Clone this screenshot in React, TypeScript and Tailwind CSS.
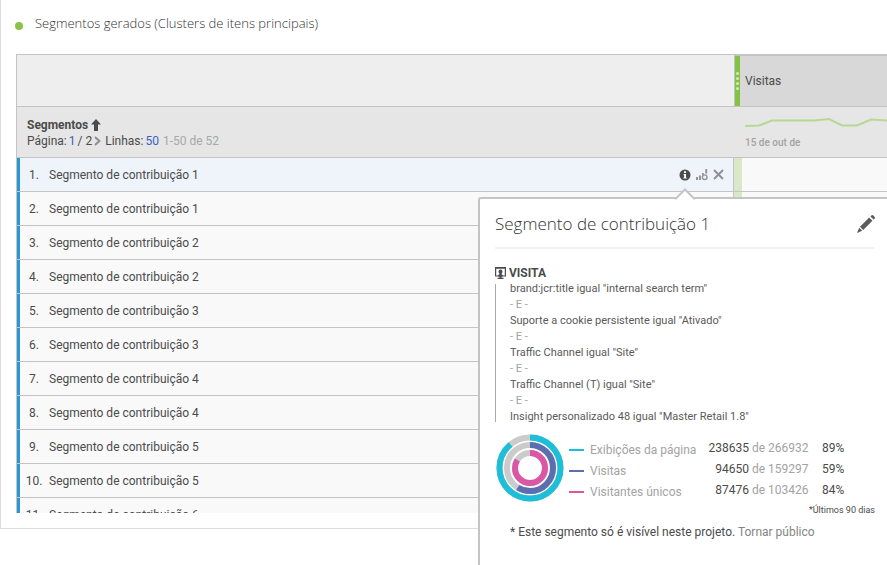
import React from "react";

const segments = [1, 1, 2, 2, 3, 3, 4, 4, 5, 5, 6].map((n) => `Segmento de contribuição ${n}`);

const rules = [
  'brand:jcr:title igual "internal search term"',
  'Suporte a cookie persistente igual "Ativado"',
  'Traffic Channel igual "Site"',
  'Traffic Channel (T) igual "Site"',
  'Insight personalizado 48 igual "Master Retail 1.8"',
];

const metrics = [
  { name: "Exibições da página", value: "238635", total: "266932", percent: 89, color: "#1dbfd8", radius: 30.5 },
  { name: "Visitas", value: "94650", total: "159297", percent: 59, color: "#5a6eb0", radius: 23 },
  { name: "Visitantes únicos", value: "87476", total: "103426", percent: 84, color: "#db57a6", radius: 15 },
];

function ArrowUpIcon() {
  return (
    <svg className="h-[12px] w-[10px]" viewBox="0 0 10 12" fill="#4b4b4b" aria-hidden="true">
      <path d="M5 0 10 5.5H7V12H3V5.5H0z" />
    </svg>
  );
}

function InfoIcon() {
  return (
    <svg className="size-[12px]" viewBox="0 0 12 12" aria-hidden="true">
      <circle cx="6" cy="6" r="5.5" fill="#4b4b4b" />
      <path d="M5 2.3h2v1.6H5zM4.5 5H7v3.5h.7v1H4.4v-1h.7V6h-.6z" fill="#fff" />
    </svg>
  );
}

function TrendIcon() {
  return (
    <svg className="size-[12px]" viewBox="0 0 12 12" aria-hidden="true">
      <path d="M0 8h2v3H0zM3 6.5h2V11H3zM9.3 0h1.9v4.5H9.3zM6 4h1.8v2H6z" fill="#949494" />
      <circle cx="8.7" cy="8.2" r="2.3" fill="none" stroke="#949494" strokeWidth="1.4" />
    </svg>
  );
}

function CloseIcon() {
  return (
    <svg className="size-[11px]" viewBox="0 0 11 11" aria-hidden="true">
      <path d="m1 1 9 9m0-9-9 9" stroke="#8f8f97" strokeWidth="1.9" />
    </svg>
  );
}

function PencilIcon() {
  return (
    <svg className="size-[18px]" viewBox="0 0 18 18" fill="#5c5c5c" aria-hidden="true">
      <path d="m12.2 2.6 3.2 3.2-9.2 9.2L3 11.8zM13.4 1.4l.9-.9a1.4 1.4 0 0 1 2 0l1.2 1.2a1.4 1.4 0 0 1 0 2l-.9.9zM2.2 12.7l3.1 3.1L0 18z" />
    </svg>
  );
}

function VisitIcon() {
  return (
    <svg className="h-[12px] w-[11px]" viewBox="0 0 11 12" aria-hidden="true">
      <path d="M.6 1h9.8v8H.6z" fill="#fff" stroke="#4b4b4b" strokeWidth="1.2" />
      <path d="M0 0h11v1.5H0zM3.5 4.4a2 2 0 0 1 4 0c0 1-.4 1.7-.9 2.1v.7l1.2.8v1.5H3.2V8l1.2-.8v-.7c-.5-.4-.9-1.1-.9-2.1zM4.5 9h2v1.8h2V12h-6v-1.2h2z" fill="#4b4b4b" />
    </svg>
  );
}

function RingChart() {
  return (
    <svg className="size-[68px] shrink-0" viewBox="-34 -34 68 68" role="img" aria-label="Percentuais do segmento">
      {metrics.map((m) => (
        <g key={m.name} fill="none" strokeWidth="6" transform="rotate(-90)">
          <circle r={m.radius} stroke="#cbcbcb" />
          <circle r={m.radius} stroke={m.color} pathLength="100" strokeDasharray={`${m.percent} 100`} />
        </g>
      ))}
    </svg>
  );
}

function SegmentTable() {
  return (
    <div className="h-[459px] overflow-hidden">
      <table className="w-full table-fixed border-separate border-spacing-0 border-l border-t border-[#c4c4c4] text-left text-xs leading-4 text-[#4b4b4b]">
        <colgroup>
          <col />
          <col className="w-[153px]" />
        </colgroup>
        <thead>
          <tr className="h-[52px]">
            <td className="border-b border-[#c4c4c4] bg-[#eeeeee]" />
            <th scope="col" className="border-b border-l border-t border-[#c4c4c4] bg-[#d8d8d8] p-0 font-normal">
              <div className="flex h-[50px] items-center gap-[5px]">
                <span className="flex h-full w-[5px] flex-col items-center justify-center gap-[2px] bg-[#82c341]">
                  {[0, 1, 2, 3].map((dot) => (
                    <i key={dot} className="size-[3px] rounded-full bg-[#d3eabb]" />
                  ))}
                </span>
                Visitas
              </div>
            </th>
          </tr>
          <tr className="h-[51px] bg-[#e6e6e6]">
            <th scope="col" className="border-b border-[#c4c4c4] p-0 pl-[10px] pt-[2px] font-normal">
              <div className="flex items-center gap-[3px]">
                <b>Segmentos</b>
                <button type="button" aria-label="Ordenar"><ArrowUpIcon /></button>
              </div>
              <div className="flex items-center gap-[2px]">
                <span>Página:</span>
                <a href="#pagina" className="text-[#3860be]">1</a>
                <span>/ 2</span>
                <button type="button" aria-label="Próxima página" className="mr-[2px]">
                  <svg className="h-[10px] w-[7px]" viewBox="0 0 7 10" fill="none" aria-hidden="true">
                    <path d="m1 1 4.4 4L1 9" stroke="#8f8f8f" strokeWidth="2" />
                  </svg>
                </button>
                <span>Linhas:</span>
                <a href="#linhas" className="text-[#3860be]">50</a>
                <span className="ml-[2px] text-[#a8a8a8]">1-50 de 52</span>
              </div>
            </th>
            <td className="border-b border-[#c4c4c4] p-0 pl-[11px] align-top">
              <svg className="mt-[9px] h-[14px] w-[142px]" viewBox="0 0 142 14" fill="none" aria-hidden="true">
                <path d="m0 10 14-.5 13-5h42l15-1.5 13 6.5h15l14-6 16 1" stroke="#b7d894" strokeWidth="2" />
              </svg>
              <div className="mt-[5px] text-[10px] font-medium text-[#a3a3a3]">15 de out de</div>
            </td>
          </tr>
        </thead>
        <tbody>
          {segments.map((name, i) => (
            <tr key={i} className={i === 0 ? "h-[34px] bg-[#eef4f9]" : "h-[34px] bg-[#f9f9f9]"}>
              <td className="border-b border-r border-[#c4c4c4] p-0">
                <div className="flex h-[33px] items-center border-l-[3px] border-[#2899d5] pl-[5px] pr-[9px]">
                  <span className="w-[18px] text-center">{i + 1}.</span>
                  <span className="ml-[6px] flex-1">{name}</span>
                  {i === 0 && (
                    <span className="flex items-center gap-[5px]">
                      <button type="button" aria-label="Informações"><InfoIcon /></button>
                      <button type="button" aria-label="Tendência"><TrendIcon /></button>
                      <button type="button" aria-label="Remover"><CloseIcon /></button>
                    </span>
                  )}
                </div>
              </td>
              <td className="border-b border-[#c4c4c4] bg-[#f9f9f9] p-0">
                <div className="h-[33px] w-2 bg-[#d9e8c6]" />
              </td>
            </tr>
          ))}
        </tbody>
      </table>
    </div>
  );
}

function SegmentPopover() {
  return (
    <aside className="absolute bottom-0 left-[478px] right-0 top-[197px] rounded-tl-[3px] border-l-2 border-t-2 border-[#c4c4c4] bg-white pl-[15px] pr-3 text-xs leading-4 text-[#4b4b4b]">
      <svg className="absolute -top-[11px] left-[195px] h-[12px] w-[20px]" viewBox="0 0 20 12" aria-hidden="true">
        <path d="M0 12v-2l10-9 10 9v2z" fill="#fff" />
        <path d="m0 10.5 1 0 9-9 9 9h1" fill="none" stroke="#c4c4c4" strokeWidth="2" />
      </svg>
      <header className="flex h-[50px] items-center justify-between border-b-2 border-[#f2f2f2] pt-px">
        <h2 className="font-['Open_Sans','Noto_Sans',sans-serif] text-[17px] font-light text-[#323232]">Segmento de contribuição 1</h2>
        <button type="button" aria-label="Editar segmento"><PencilIcon /></button>
      </header>
      <h3 className="mt-4 flex items-center gap-[3px] font-bold">
        <VisitIcon />
        VISITA
      </h3>
      <div className="mt-[3px] flex h-[138px] items-center border-l border-[#a8a8a8] pl-[14px] text-[11px] leading-4 text-[#5a5a5a]">
        <div>
          {rules.map((rule, i) => (
            <React.Fragment key={rule}>
              {i > 0 && <p className="text-[#a3a3a3]">- E -</p>}
              <p>{rule}</p>
            </React.Fragment>
          ))}
        </div>
      </div>
      <div className="mt-3 flex items-start pl-px">
        <RingChart />
        <table className="ml-[5px] mt-[3px] w-full min-w-0 table-fixed border-separate border-spacing-0 text-left">
          <colgroup>
            <col className="w-[21px]" />
            <col className="w-[109px]" />
            <col className="w-[50px]" />
            <col className="w-[73px]" />
            <col />
          </colgroup>
          <tbody>
            {metrics.map((m) => (
              <tr key={m.name} className="h-[21px]">
                <td className="p-0 pt-1"><div className="h-[2px] w-[15px]" style={{ backgroundColor: m.color }} /></td>
                <th scope="row" className="whitespace-nowrap p-0 pt-[5px] font-normal text-[#a3a3a3]">{m.name}</th>
                <td className="p-0 text-right">{m.value}</td>
                <td className="whitespace-nowrap p-0 pl-[3px] text-[#a3a3a3]">de {m.total}</td>
                <td className="p-0">{m.percent}%</td>
              </tr>
            ))}
          </tbody>
        </table>
      </div>
      <p className="text-right text-[9px] leading-4">*Últimos 90 dias</p>
      <p className="ml-[15px] mt-[6px]">
        * Este segmento só é visível neste projeto. <a href="#publico" className="text-[#858585]">Tornar público</a>
      </p>
    </aside>
  );
}

export default function App() {
  return (
    <div className="relative min-h-screen overflow-hidden bg-white font-[Roboto,'Noto_Sans',sans-serif]">
      <main className="border-b border-l border-[#dddddd] pb-[15px] pl-[14px]">
        <h1 className="flex h-[54px] items-center gap-3 pb-[6px] font-['Open_Sans','Noto_Sans',sans-serif] text-[13px] font-light text-[#323232]">
          <span className="mt-1 size-2 rounded-full bg-[#8bc34a]" />
          Segmentos gerados (Clusters de itens principais)
        </h1>
        <div className="pl-px">
          <SegmentTable />
        </div>
      </main>
      <SegmentPopover />
    </div>
  );
}
